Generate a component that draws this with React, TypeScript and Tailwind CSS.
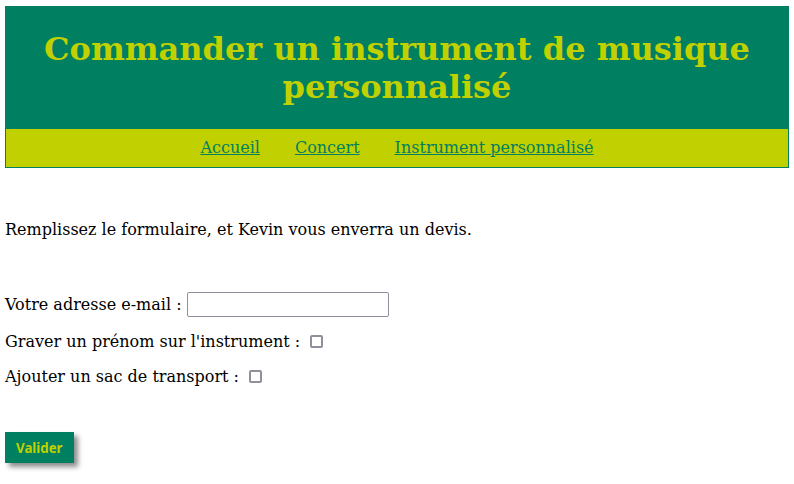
import React from 'react';

const navItems = ['Accueil', 'Concert', 'Instrument personnalisé'];

const Checkbox: React.FC = () => (
  <span className="inline-block w-[13px] h-[13px] border-2 border-[#8f8f9d] rounded-[2px] bg-white" />
);

const App: React.FC = () => {
  return (
    <div className="min-h-[484px] bg-white px-[5px] pt-[6px] font-['DejaVu_Serif',serif] text-[16px] text-black">
      {/* Header */}
      <header className="bg-[#008060]">
        <h1 className="pt-[24px] pb-[22px] text-center text-[32px] leading-[38px] font-bold text-[#c0d000]">
          Commander un instrument de musique
          <br />
          personnalisé
        </h1>
      </header>

      {/* Nav */}
      <nav className="h-[40px] border border-[#008060] bg-[#c0d000] flex items-center justify-center gap-[35px] pb-[1px]">
        {navItems.map((item) => (
          <a key={item} href="#" className="text-[#008060] underline leading-[19px]">
            {item}
          </a>
        ))}
      </nav>

      <p className="mt-[52px] leading-[19px]">Remplissez le formulaire, et Kevin vous enverra un devis.</p>

      {/* Form */}
      <form className="mt-[53px]" onSubmit={(e) => e.preventDefault()}>
        <div className="flex items-center h-[25px] gap-[5px]">
          <label className="leading-[19px]">Votre adresse e-mail :</label>
          <input
            type="email"
            className="w-[202px] h-[25px] border border-[#8f8f9d] rounded-[2px] bg-white outline-none"
          />
        </div>
        <div className="mt-[12px] flex items-center h-[25px] gap-[10px]">
          <label className="leading-[19px]">Graver un prénom sur l'instrument :</label>
          <Checkbox />
        </div>
        <div className="mt-[10px] flex items-center h-[25px] gap-[10px]">
          <label className="leading-[19px]">Ajouter un sac de transport :</label>
          <Checkbox />
        </div>
        <button
          type="submit"
          className="mt-[43px] h-[31px] px-[11px] bg-[#008060] text-[#c0d000] font-['Noto_Sans',sans-serif] font-bold text-[13.3px] leading-[18px] shadow-[4px_4px_5px_rgba(0,0,0,0.45)]"
        >
          Valider
        </button>
      </form>
    </div>
  );
};

export default App;
